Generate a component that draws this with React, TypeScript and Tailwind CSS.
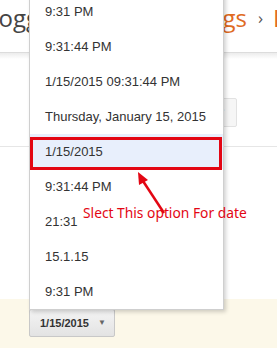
import React from "react";

const options = [
  "9:31 PM",
  "9:31:44 PM",
  "1/15/2015 09:31:44 PM",
  "Thursday, January 15, 2015",
  "1/15/2015",
  "9:31:44 PM",
  "21:31",
  "15.1.15",
  "9:31 PM",
];

export default function App() {
  const selected = 4;

  return (
    <div className="relative w-[277px] h-[349px] overflow-hidden bg-white font-['Liberation_Sans',Arial,sans-serif]">
      {/* breadcrumb header */}
      <div className="h-[53px] border-b border-[#dcdcdc] overflow-hidden">
        <div className="flex w-[400px] items-center whitespace-nowrap pt-[3px] text-[24px] font-['Open_Sans',sans-serif] leading-[30px]">
          <div className="flex w-[247px] shrink-0 justify-between">
            <span className="ml-[-23px] text-[#444]">Blogger</span>
            <span className="text-[#e06b1f]">Settings</span>
          </div>
          <span className="ml-[11px] shrink-0 text-[17px] text-[#555]">›</span>
          <span className="ml-[10px] shrink-0 text-[#e06b1f]">Language</span>
        </div>
      </div>
      <div className="h-[6px] bg-gradient-to-b from-[#ececec] to-white" />

      {/* page content behind the menu */}
      <div className="flex justify-end pt-[39px] pr-[40px]">
        <div className="flex h-[29px] w-[120px] items-center justify-end rounded-[2px] border border-[#e2e2e2] bg-[#f6f6f6] pr-[10px]">
          <span className="text-[9px] text-[#777]">▼</span>
        </div>
      </div>
      <div className="mt-[19px] h-px bg-[#e6e6e6]" />

      <div className="mt-[152px] h-[49px] bg-[#fcf8e9] pl-[29px] pt-[10px]">
        <button className="flex h-[28px] w-[86px] items-center rounded-[2px] border border-[#c8c8c8] bg-gradient-to-b from-[#f4f4f4] to-[#e3e3e3] pl-[10px] text-[11px] font-bold text-[#333]">
          1/15/2015
          <span className="ml-[9px] text-[8px] text-[#666]">▼</span>
        </button>
      </div>

      {/* open dropdown menu */}
      <ul className="absolute left-[29px] top-[-7px] w-[195px] border border-[#cfcfcf] bg-white shadow-[2px_2px_4px_rgba(0,0,0,0.18)]">
        {options.map((o, i) => (
          <li
            key={i}
            className={`flex h-[35px] items-center pl-[15px] text-[13px] text-[#333] ${
              i === selected ? "bg-[#e8effc]" : ""
            }`}
          >
            {o}
          </li>
        ))}
      </ul>

      {/* annotation */}
      <div className="absolute left-[30px] top-[137px] h-[33px] w-[192px] border-[3px] border-[#e30613]" />
      <svg className="absolute left-0 top-0" width="277" height="349">
        <line x1="164" y1="213" x2="141" y2="178" stroke="#e30613" strokeWidth="2.5" />
        <polygon points="138,172 148,180 139,185" fill="#e30613" />
      </svg>
      <span className="absolute left-[83px] top-[204px] whitespace-nowrap font-['Noto_Sans',sans-serif] text-[13.8px] leading-[18px] text-[#e30613]">
        Slect This option For date
      </span>
    </div>
  );
}
